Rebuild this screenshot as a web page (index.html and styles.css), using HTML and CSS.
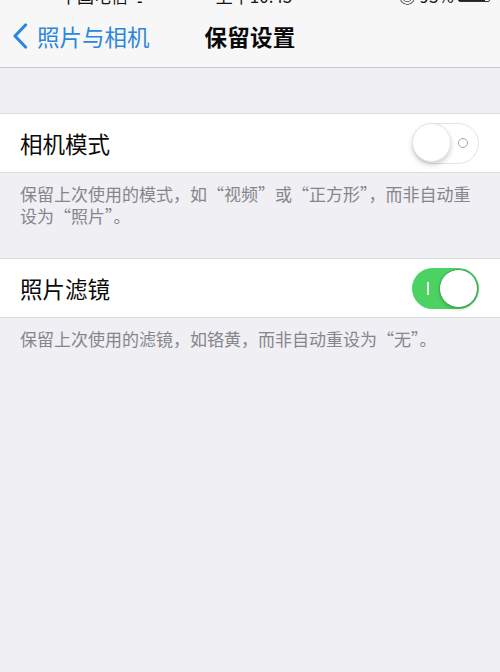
FILE: index.html
```html
<!DOCTYPE html>
<html lang="zh-CN">
<head>
<meta charset="utf-8">
<title>保留设置</title>
<link rel="stylesheet" href="styles.css">
</head>
<body>
<div class="status">
  <div class="status-inner">
    <span class="carrier">中国电信 ᯤ</span>
    <span class="time">上午10:43</span>
    <span class="right">◎ 93% <span class="battery"></span></span>
  </div>
</div>
<header class="nav">
  <a class="back">
    <svg class="chev" width="16" height="26" viewBox="0 0 16 26"><path d="M13.5 2 L3 13 L13.5 24" fill="none" stroke="#2b87de" stroke-width="3.2" stroke-linecap="round" stroke-linejoin="round"/></svg>
    <span>照片与相机</span>
  </a>
  <h1 class="title">保留设置</h1>
  <span></span>
</header>

<section class="group first">
  <div class="cell">
    <span class="label">相机模式</span>
    <span class="switch off"><span class="knob"></span><span class="ring"></span></span>
  </div>
  <p class="footer">保留上次使用的模式，如“视频”或“正方形”，而非自动重设为“照片”。</p>
</section>

<section class="group second">
  <div class="cell">
    <span class="label">照片滤镜</span>
    <span class="switch on"><span class="bar"></span><span class="knob"></span></span>
  </div>
  <p class="footer">保留上次使用的滤镜，如铬黄，而非自动重设为“无”。</p>
</section>
</body>
</html>
```

FILE: styles.css
```css
html, body {
  margin: 0;
  padding: 0;
}
body {
  width: 500px;
  height: 672px;
  background: #efeff4;
  font-family: "Noto Sans CJK SC", "Noto Sans", sans-serif;
  overflow: hidden;
}
.status {
  height: 8px;
  overflow: hidden;
  background: #f7f7f8;
}
.status-inner {
  display: flex;
  align-items: center;
  height: 24px;
  margin-top: -17px;
  font-size: 17px;
  color: #111;
  padding: 0 10px 0 60px;
}
.status-inner .time {
  margin-left: 68px;
}
.status-inner .right {
  margin-left: auto;
  display: flex;
  align-items: center;
  gap: 4px;
}
.battery {
  display: inline-block;
  width: 30px;
  height: 12px;
  border: 1px solid #333;
  border-radius: 2px;
  background: linear-gradient(90deg, #222 88%, transparent 88%);
}
.nav {
  height: 59px;
  background: #f7f7f8;
  border-bottom: 1px solid #c9c9ce;
  display: grid;
  grid-template-columns: 1fr auto 1fr;
  align-items: center;
}
.back {
  display: flex;
  align-items: center;
  padding-left: 12px;
  gap: 9px;
  color: #2b87de;
  font-size: 22.5px;
  margin-top: -3px;
}
.chev {
  display: block;
}
.title {
  margin: -3px 0 0 0;
  font-size: 22.5px;
  font-weight: 600;
  color: #0a0a0a;
  letter-spacing: 0.3px;
}
.group.first {
  margin-top: 45px;
}
.group.second {
  margin-top: 31px;
}
.cell {
  height: 58px;
  background: #fff;
  border-top: 1px solid #dcdce0;
  border-bottom: 1px solid #dcdce0;
  display: flex;
  align-items: center;
  justify-content: space-between;
  padding: 0 21px 0 20px;
}
.label {
  font-size: 22.5px;
  color: #0a0a0a;
}
.footer {
  margin: 0;
  padding: 10px 14px 0 20px;
  font-size: 17px;
  line-height: 22px;
  color: #86868b;
}
.switch {
  position: relative;
  width: 67px;
  height: 41px;
  border-radius: 21px;
  box-sizing: border-box;
}
.switch.off {
  background: #fff;
  border: 1.5px solid #e3e3e7;
}
.switch.on {
  background: #4bd263;
}
.switch .knob {
  position: absolute;
  top: 0;
  width: 39px;
  height: 39px;
  border-radius: 50%;
  background: #fff;
  box-sizing: border-box;
}
.switch.off .knob {
  left: -1px;
  top: -0.5px;
  border: 1px solid #e4e4e6;
  box-shadow: 0 3px 5px rgba(0,0,0,0.18);
}
.switch.on .knob {
  right: 1px;
  top: 1px;
  border: 1.5px solid #3b9f4e;
  box-shadow: 0 2px 3px rgba(0,0,0,0.15);
}
.switch .ring {
  position: absolute;
  right: 10px;
  top: 14px;
  width: 10px;
  height: 10px;
  border: 1.5px solid #a6a6aa;
  border-radius: 50%;
  box-sizing: border-box;
}
.switch .bar {
  position: absolute;
  left: 15px;
  top: 14px;
  width: 1.5px;
  height: 13px;
  background: #e8f8ea;
}
```
